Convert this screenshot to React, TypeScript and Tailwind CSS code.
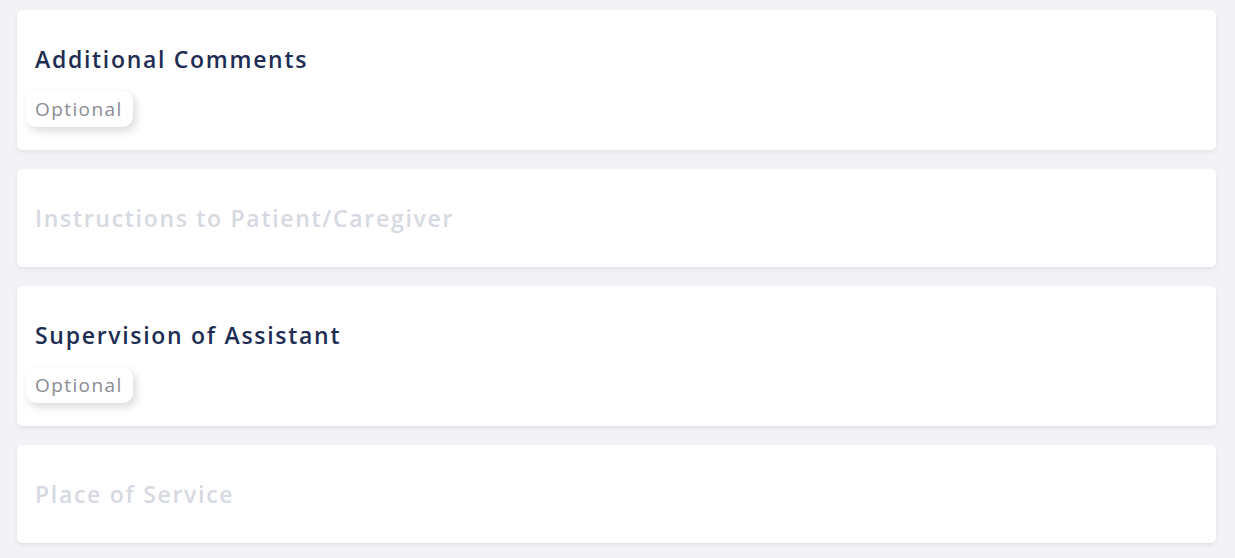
import React from 'react';

type Section = { title: string; enabled: boolean };

const sections: Section[] = [
  { title: 'Additional Comments', enabled: true },
  { title: 'Instructions to Patient/Caregiver', enabled: false },
  { title: 'Supervision of Assistant', enabled: true },
  { title: 'Place of Service', enabled: false },
];

const SectionCard: React.FC<{ section: Section }> = ({ section }) => {
  return (
    <div className={`bg-white rounded-[5px] shadow-[0_2px_4px_rgba(40,40,80,0.09)] pl-[18px] pt-[35px] ${section.enabled ? 'pb-[23px]' : 'pb-[35px]'}`}>
      <div
        className={`text-[23px] leading-[28px] font-semibold tracking-[1.7px] ${section.enabled ? 'text-[#1d2d53]' : 'text-[#d6d9e1]'}`}
      >
        {section.title}
      </div>
      {section.enabled && (
        <div className="mt-[18px] -ml-[9px] inline-flex h-[36px] items-center rounded-[10px] bg-white pl-[9px] pr-[10px] text-[19px] tracking-[1.4px] text-[#8b8b93] shadow-[3px_4px_8px_rgba(0,0,0,0.15)]">
          Optional
        </div>
      )}
    </div>
  );
};

export default function App() {
  return (
    <div
      className="min-h-[558px] w-full bg-[#f3f3f7] pl-[17px] pr-[19px] pt-[10px] pb-[15px] flex flex-col gap-[19px]"
      style={{ fontFamily: '"Open Sans", "Noto Sans", sans-serif' }}
    >
      {sections.map((s) => (
        <SectionCard key={s.title} section={s} />
      ))}
    </div>
  );
}
